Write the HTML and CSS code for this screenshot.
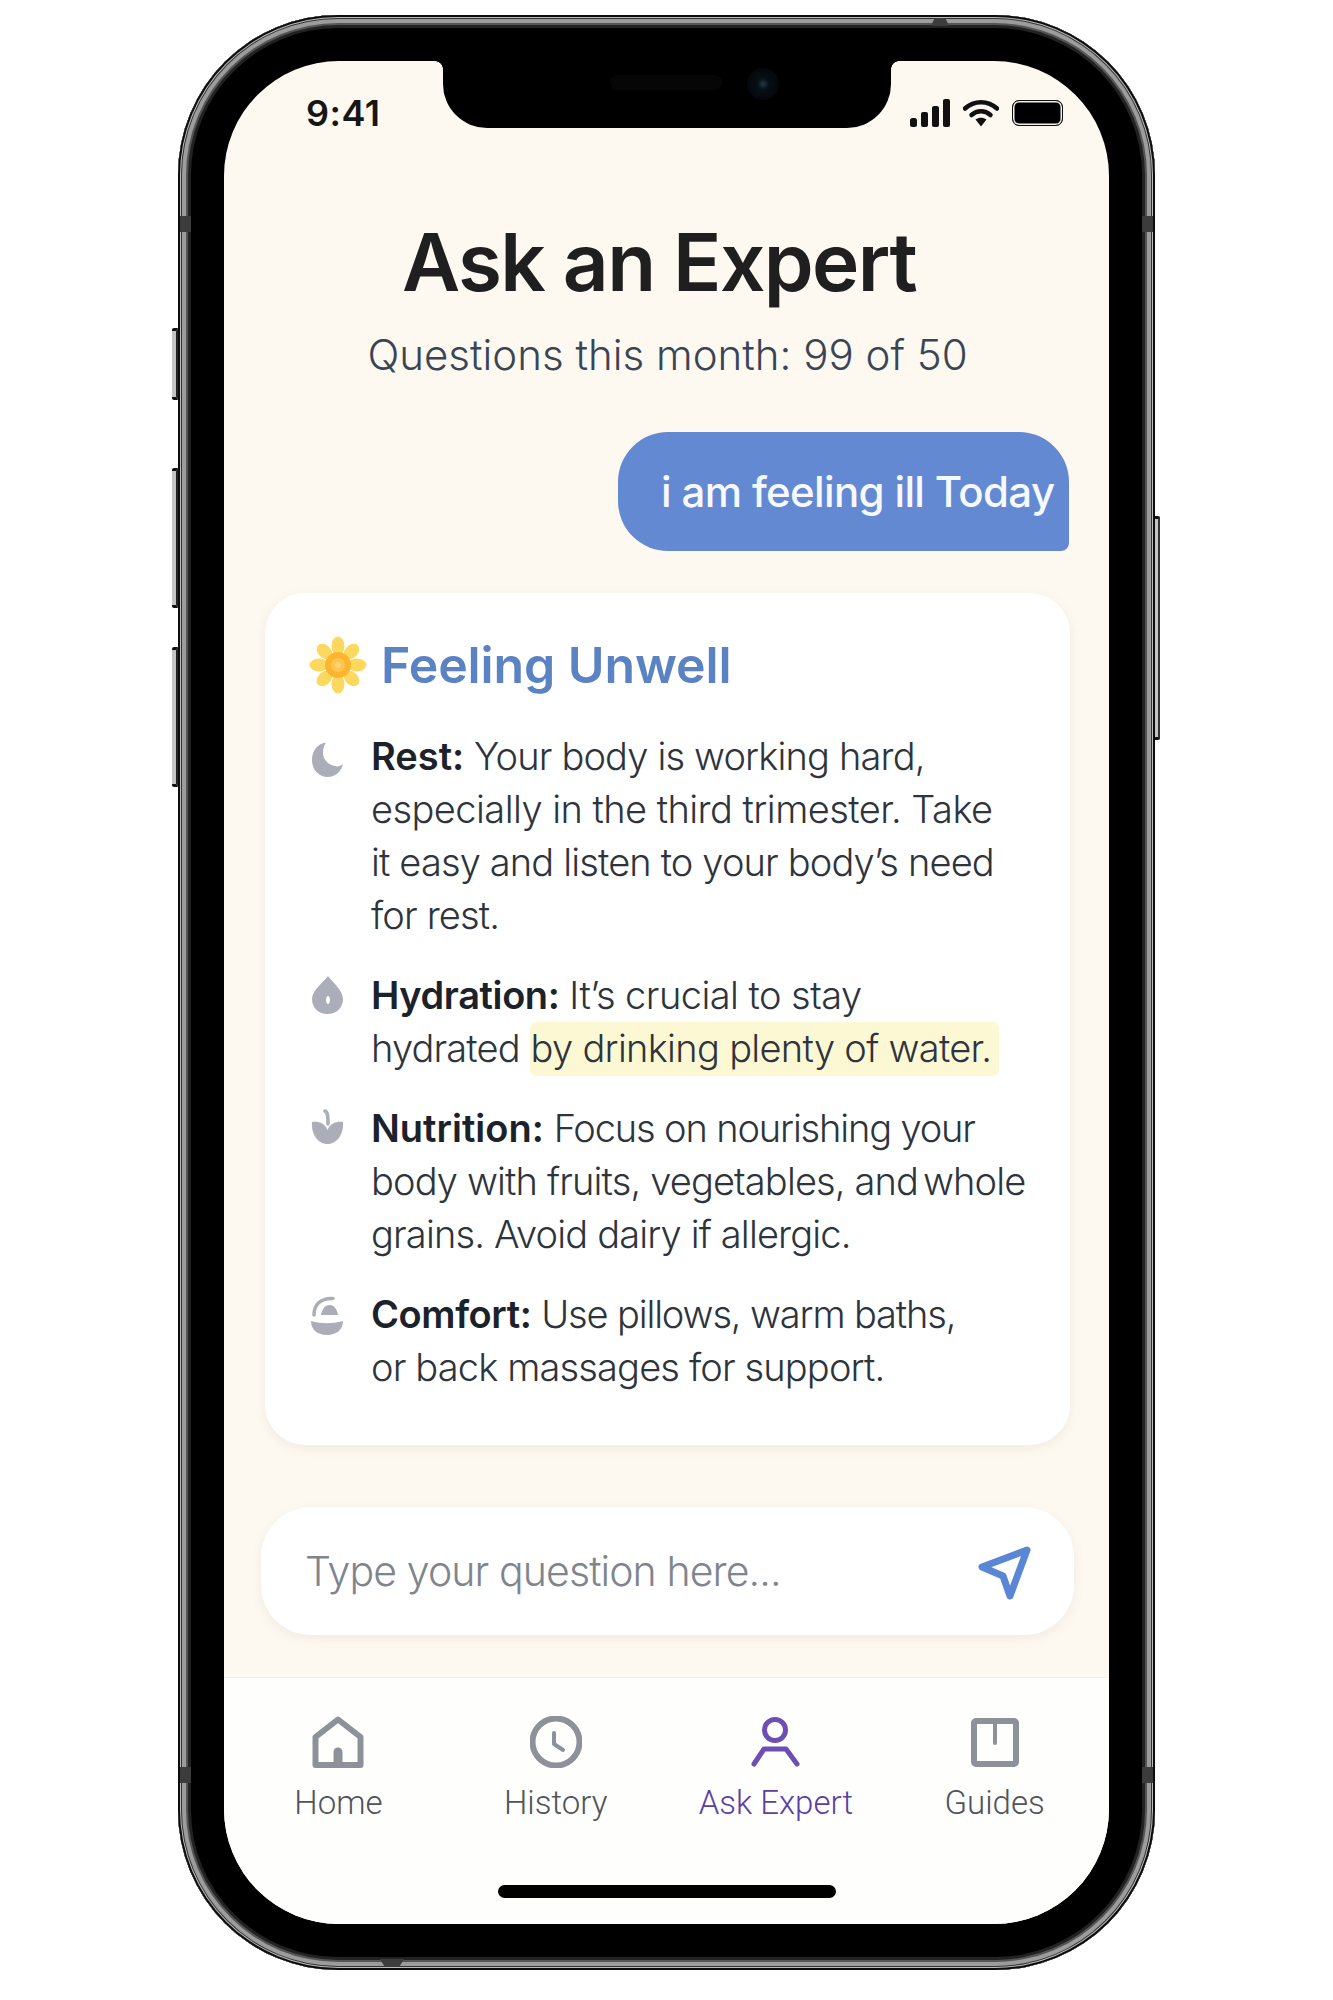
FILE: index.html
```html
<!DOCTYPE html>
<html lang="en">
<head>
  <meta charset="UTF-8" />
  <meta name="viewport" content="width=device-width, initial-scale=1.0"/>
  <title>Ask an Expert</title>
  <link rel="stylesheet" href="styles.css">
</head>
<body>
  <div class="phone">
    <span class="side-btn btn-mute"></span>
    <span class="side-btn btn-up"></span>
    <span class="side-btn btn-down"></span>
    <span class="side-btn btn-power"></span>
    <span class="band band-left-1"></span>
    <span class="band band-right-1"></span>
    <span class="band band-left-2"></span>
    <span class="band band-right-2"></span>
    <span class="band band-top"></span>
    <span class="band band-bottom"></span>

    <div class="screen">
      <div class="notch">
        <span class="speaker"></span>
        <span class="camera"></span>
      </div>

      <div class="status">
        <span class="time">9:41</span>
        <div class="status-icons">
          <svg width="40" height="28" viewBox="0 0 40 28"><rect x="0" y="19" width="7" height="9" rx="2.5"/><rect x="11" y="13" width="7" height="15" rx="2"/><rect x="22" y="7" width="7" height="21" rx="2"/><rect x="33" y="0" width="7" height="28" rx="2"/></svg>
          <svg width="36" height="28" viewBox="0 0 36 28"><path d="M2 9.5C11 1 25 1 34 9.5" class="wifi"/><path d="M8.5 16C14 11 22 11 27.5 16" class="wifi"/><path d="M12.5 20.5L18 27.5L23.5 20.5C20 18 16 18 12.5 20.5Z"/></svg>
          <span class="battery"></span>
        </div>
      </div>

      <main class="content">
        <h1>Ask an Expert</h1>
        <p class="sub">Questions this month: 99 of 50</p>

        <div class="bubble">i am feeling ill Today</div>

        <section class="card">
          <h2>
            <svg class="flower" width="60" height="60" viewBox="0 0 60 60">
              <g fill="#fcd95e">
                <ellipse cx="30" cy="11" rx="6.5" ry="9.5"/>
                <ellipse cx="30" cy="49" rx="6.5" ry="9.5"/>
                <ellipse cx="11" cy="30" rx="9.5" ry="6.5"/>
                <ellipse cx="49" cy="30" rx="9.5" ry="6.5"/>
                <ellipse cx="16.5" cy="16.5" rx="6.5" ry="9" transform="rotate(-45 16.5 16.5)"/>
                <ellipse cx="43.5" cy="16.5" rx="6.5" ry="9" transform="rotate(45 43.5 16.5)"/>
                <ellipse cx="16.5" cy="43.5" rx="6.5" ry="9" transform="rotate(45 16.5 43.5)"/>
                <ellipse cx="43.5" cy="43.5" rx="6.5" ry="9" transform="rotate(-45 43.5 43.5)"/>
              </g>
              <circle cx="30" cy="30" r="13" fill="#fbb52e"/>
              <circle cx="30" cy="30" r="7" fill="#fdc550"/>
              <circle cx="30" cy="30" r="3" fill="#fdd377"/>
            </svg>
            Feeling Unwell
          </h2>

          <div class="item">
            <svg class="tip" viewBox="0 0 36 42"><path d="M16 5.5C7 7 2 14 2 23C2 33 9 40 18 40C25 40 31 35 33 27C31 29 27 30 25 29C18 28 13 22 13 16C13 12 14 8 16 5.5Z"/></svg>
            <p><b>Rest:</b> Your body is working hard,<br><span class="wide">especially in the third trimester. Take</span><br>it easy and listen to your body’s need<br>for rest.</p>
          </div>

          <div class="item">
            <svg class="tip" viewBox="0 0 36 42"><path d="M18 0C14 6 2 14 2 23C2 32 9 38 17.5 38C26 38 33 32 33 23C33 14 22 6 18 0Z"/><ellipse cx="18" cy="24" rx="1.8" ry="4" fill="#fff"/></svg>
            <p><b class="tight-bold">Hydration:</b> <span class="wide">It’s crucial to stay</span><br>hydrated <mark>by drinking plenty of water.</mark></p>
          </div>

          <div class="item">
            <svg class="tip" viewBox="0 0 36 42"><path d="M2 13C8 12 15 14 17.5 21C20 14 27 12 33 13C34 25 27 35 17.5 35C8 35 1 25 2 13Z"/><path d="M15 2C18 3 18 8 18 15" class="tip-line"/></svg>
            <p><b>Nutrition:</b> <span class="tight">Focus on nourishing your</span><br>body with fruits, vegetables, <span class="close-gap">and whole</span><br>grains. Avoid dairy if allergic.</p>
          </div>

          <div class="item">
            <svg class="tip" viewBox="0 0 36 42"><path d="M4 20C4 10 10 3 23 3.5" class="tip-line"/><path d="M11 20C12 14 15 10 19.5 10C24 10 27 14 28 20Z"/><path d="M1 26C12 29 22 29 33 26C33 35 26 40 17 40C8 40 1 35 1 26Z"/></svg>
            <p><b class="tight-bold">Comfort:</b> <span class="tight">Use pillows, warm baths,</span><br>or back massages for support.</p>
          </div>
        </section>

        <div class="ask">
          <span class="placeholder">Type your question here...</span>
          <svg class="send-icon" width="56" height="56" viewBox="0 0 56 56"><path d="M51 5L6 22L27 31L34 51Z" class="send"/></svg>
        </div>
      </main>

      <nav class="tabs">
        <div class="tab">
          <svg width="52" height="52" viewBox="0 0 52 52"><path d="M3.5 21L26 3.5L48.5 21V49H3.5Z" class="tab-line"/><path d="M26 47V36" class="tab-door"/></svg>
          <span>Home</span>
        </div>
        <div class="tab">
          <svg width="52" height="52" viewBox="0 0 52 52"><circle cx="26" cy="26" r="23.5" class="tab-line"/><path d="M24 17V28L33 34" class="tab-hand"/></svg>
          <span>History</span>
        </div>
        <div class="tab active">
          <svg width="52" height="52" viewBox="0 0 52 52"><circle cx="25" cy="14" r="10.5" class="tab-line"/><path d="M4 48L14 33H36L47 48" class="tab-line"/></svg>
          <span>Ask Expert</span>
        </div>
        <div class="tab">
          <svg width="52" height="52" viewBox="0 0 52 52"><rect x="5" y="5" width="42" height="43" rx="2" class="tab-line"/><path d="M26 6V27" class="tab-hand"/></svg>
          <span>Guides</span>
        </div>
      </nav>

      <div class="home-bar"></div>
    </div>
  </div>
</body>
</html>
```

FILE: styles.css
```css
* { box-sizing: border-box; }

body {
  margin: 0;
  background: #fff;
  font-family: "Inter", "Liberation Sans", sans-serif;
  display: flex;
  justify-content: center;
  padding-top: 15px;
  height: 2000px;
  overflow: hidden;
}

/* device frame */
.phone {
  position: relative;
  width: 977px;
  height: 1955px;
  padding: 46px;
  background: #000;
  border-radius: 160px;
  box-shadow:
    inset 0 0 0 2px #0c0c0c,
    inset 0 0 0 3px #bbb,
    inset 0 0 0 4px #333,
    inset 0 0 0 8px #9c9c9c,
    inset 0 0 0 10px #555,
    inset 0 0 0 13px #222;
}

.side-btn {
  position: absolute;
  width: 6px;
  background: #c4c4c4;
  border-right: 2px solid #222;
  border-top: 3px solid #111;
  border-bottom: 3px solid #111;
  border-radius: 2px 0 0 2px;
}
.btn-mute { left: -6px; top: 313px; height: 72px; }
.btn-up { left: -6px; top: 453px; height: 140px; }
.btn-down { left: -6px; top: 632px; height: 140px; }
.btn-power {
  left: 977px;
  top: 501px;
  height: 224px;
  width: 5px;
  border-right: 2px solid #333;
  border-radius: 0 2px 2px 0;
}

.band { position: absolute; background: #3c3c3c; }
.band-left-1 { left: 2px; top: 201px; width: 11px; height: 16px; }
.band-right-1 { right: 2px; top: 201px; width: 11px; height: 16px; }
.band-left-2 { left: 2px; top: 1752px; width: 11px; height: 16px; }
.band-right-2 { right: 2px; top: 1752px; width: 11px; height: 16px; }
.band-top { left: 753px; top: 3px; width: 18px; height: 8px; clip-path: polygon(20% 0, 80% 0, 100% 100%, 0 100%); }
.band-bottom { left: 202px; bottom: 3px; width: 24px; height: 8px; clip-path: polygon(0 0, 100% 0, 80% 100%, 20% 100%); }

.screen {
  position: relative;
  height: 100%;
  background: #fdf9f1;
  border-radius: 115px;
  overflow: hidden;
  display: flex;
  flex-direction: column;
}

.notch {
  position: absolute;
  left: 219px;
  top: 0;
  width: 448px;
  height: 67px;
  background: #000;
  border-radius: 0 0 44px 44px;
}
/* small rounded shoulders where the notch meets the top edge */
.notch::before,
.notch::after {
  content: "";
  position: absolute;
  top: 0;
  width: 8px;
  height: 8px;
}
.notch::before {
  left: -8px;
  background: radial-gradient(circle at 0 100%, transparent 7.5px, #000 8px);
}
.notch::after {
  right: -8px;
  background: radial-gradient(circle at 100% 100%, transparent 7.5px, #000 8px);
}
.speaker {
  position: absolute;
  left: 167px;
  top: 14px;
  width: 112px;
  height: 15px;
  border-radius: 8px;
  background: #060606;
}
.camera {
  position: absolute;
  left: 304px;
  top: 7px;
  width: 32px;
  height: 32px;
  border-radius: 50%;
  background: radial-gradient(circle, #1b3a4c 0, #071016 25%, #05070a 70%);
}

.status {
  display: flex;
  justify-content: space-between;
  align-items: center;
  height: 30px;
  margin-top: 37px;
  padding: 0 46px 0 82px;
}
.time {
  font-size: 36px;
  font-weight: 600;
  color: #161616;
  letter-spacing: 0.5px;
}
.status-icons {
  display: flex;
  align-items: center;
  gap: 13px;
}
.status-icons svg { fill: #111; }
.wifi { fill: none; stroke: #111; stroke-width: 4.5; stroke-linecap: round; }
.battery {
  width: 51px;
  height: 26px;
  background: #000;
  border: 1px solid #111;
  border-radius: 7px;
  box-shadow: inset 0 0 0 1.5px #f4f1e8;
}

.content {
  padding: 0 39px 0 41px;
  display: flex;
  flex-direction: column;
}

h1 {
  margin: 88px 0 0;
  padding-right: 17px;
  font-size: 80px;
  line-height: 91px;
  font-weight: 600;
  letter-spacing: -1.6px;
  text-align: center;
  color: #1f1f1f;
}
.sub {
  margin: 23px 0 0;
  font-size: 42px;
  line-height: 50px;
  font-weight: 350;
  text-align: center;
  color: #3a4554;
}

.bubble {
  align-self: flex-end;
  margin: 52px 1px 0 0;
  width: 451px;
  height: 119px;
  padding-left: 43px;
  display: flex;
  align-items: center;
  border-radius: 50px 50px 8px 50px;
  background: #6389d2;
  color: #f6f9ff;
  font-size: 42px;
  font-weight: 500;
  letter-spacing: -0.65px;
  white-space: nowrap;
}

.card {
  margin-top: 42px;
  height: 852px;
  padding: 42px 20px 0 43px;
  background: #fff;
  border-radius: 40px;
  box-shadow: 0 3px 12px rgba(120, 95, 50, 0.09);
}
h2 {
  margin: 0 0 35px;
  display: flex;
  align-items: center;
  gap: 13px;
  height: 60px;
  font-size: 50px;
  font-weight: 600;
  letter-spacing: -0.1px;
  color: #5b83c4;
}
.flower { flex: none; }

.item {
  display: flex;
  gap: 25px;
  margin-top: 27px;
}
.tip {
  flex: none;
  width: 36px;
  height: 42px;
  margin: 7px 0 0 2px;
  fill: #a9aeb9;
}
.tip-line { fill: none; stroke: #a9aeb9; stroke-width: 3.5; stroke-linecap: round; }
.item p {
  margin: 0;
  font-size: 38px;
  line-height: 53px;
  font-weight: 350;
  letter-spacing: -0.85px;
  color: #2e343c;
  white-space: nowrap;
}
.item b { font-weight: 600; letter-spacing: 0; color: #1c2229; }
.item .tight-bold { letter-spacing: -0.4px; }
.wide { letter-spacing: -0.55px; }
.tight { letter-spacing: -1.15px; }
.close-gap { word-spacing: -5px; }
mark {
  background: #fdf8d4;
  color: inherit;
  letter-spacing: -0.7px;
  padding: 3px 8px 5px 1px;
  border-radius: 6px;
}

.ask {
  margin: 62px -4px 0;
  height: 128px;
  padding: 0 42px 0 44px;
  display: flex;
  align-items: center;
  justify-content: space-between;
  background: #fff;
  border-radius: 50px;
  box-shadow: 0 4px 12px rgba(120, 95, 50, 0.08);
}
.placeholder {
  font-size: 41px;
  font-weight: 300;
  letter-spacing: -0.9px;
  color: #7f858e;
}
.send-icon { margin-top: 4px; }
.send {
  fill: none;
  stroke: #5a86d6;
  stroke-width: 7;
  stroke-linejoin: round;
}

.tabs {
  margin-top: 42px;
  flex: 1;
  padding: 38px 5px 0;
  display: grid;
  grid-template-columns: repeat(4, 1fr);
  align-items: start;
  background: #fefefd;
  border-top: 1px solid #f6f1e6;
}
.tab {
  display: flex;
  flex-direction: column;
  align-items: center;
  gap: 15px;
  font-family: "Roboto", "Inter", sans-serif;
  font-size: 33px;
  font-weight: 300;
  line-height: 40px;
  color: #4f545b;
}
.tab:nth-child(2) { padding-right: 3px; }
.tab-line { fill: none; stroke: #8d9199; stroke-width: 6; stroke-linejoin: round; }
.tab-door { fill: none; stroke: #8d9199; stroke-width: 9; stroke-linecap: round; }
.tab-hand { fill: none; stroke: #8d9199; stroke-width: 4; stroke-linecap: round; stroke-linejoin: round; }
.tab.active { color: #5b3ea6; }
.tab.active .tab-line { stroke: #6d4fb3; stroke-width: 5; stroke-linecap: round; }

.home-bar {
  position: absolute;
  left: 274px;
  bottom: 26px;
  width: 338px;
  height: 13px;
  border-radius: 7px;
  background: #000;
}
```
